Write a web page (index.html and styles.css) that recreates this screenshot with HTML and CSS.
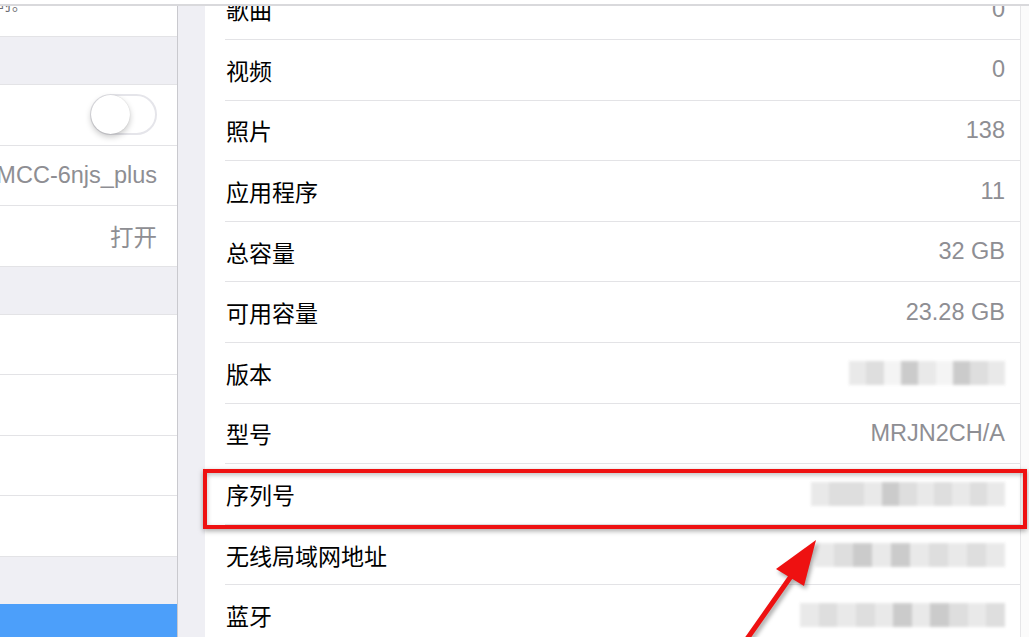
FILE: index.html
```html
<!DOCTYPE html>
<html lang="zh-CN">
<head>
  <meta charset="UTF-8">
  <title>关于本机</title>
  <link rel="stylesheet" href="styles.css">
</head>
<body>
  <div class="topbar"></div>
  <div class="screen">
    <div class="side">
      <div class="side-note"><span>在设备锁定时。</span></div>
      <div class="side-group"></div>
      <div class="side-row">
        <span class="switch"><span class="knob"></span></span>
      </div>
      <div class="side-row"><span class="side-value">CMCC-6njs_plus</span></div>
      <div class="side-row"><span class="side-value">打开</span></div>
      <div class="side-group"></div>
      <div class="side-row"></div>
      <div class="side-row"></div>
      <div class="side-row"></div>
      <div class="side-row"></div>
      <div class="side-group short"></div>
      <div class="side-selected"></div>
    </div>

    <div class="gutter"></div>

    <div class="detail">
      <ul class="info-list">
        <li><span class="label">歌曲</span><span class="value">0</span></li>
        <li><span class="label">视频</span><span class="value">0</span></li>
        <li><span class="label">照片</span><span class="value">138</span></li>
        <li><span class="label">应用程序</span><span class="value">11</span></li>
        <li><span class="label">总容量</span><span class="value">32 GB</span></li>
        <li><span class="label">可用容量</span><span class="value">23.28 GB</span></li>
        <li>
          <span class="label">版本</span>
          <span class="mosaic m-version">
            <i class="g1"></i><i class="g2"></i><i class="g0"></i><i class="g3"></i><i class="g1"></i><i class="g0"></i><i class="g3"></i><i class="g2"></i><i class="g1"></i>
          </span>
        </li>
        <li><span class="label">型号</span><span class="value">MRJN2CH/A</span></li>
        <li>
          <span class="label">序列号</span>
          <span class="mosaic m-serial">
            <i class="g1"></i><i class="g2"></i><i class="g2"></i><i class="g1"></i><i class="g3"></i><i class="g2"></i><i class="g1"></i><i class="g2"></i><i class="g1"></i><i class="g2"></i><i class="g1"></i>
          </span>
        </li>
        <li>
          <span class="label">无线局域网地址</span>
          <span class="mosaic m-wifi">
            <i class="g1"></i><i class="g2"></i><i class="g3"></i><i class="g1"></i><i class="g3"></i><i class="g1"></i><i class="g2"></i><i class="g1"></i><i class="g2"></i><i class="g1"></i>
          </span>
        </li>
        <li>
          <span class="label">蓝牙</span>
          <span class="mosaic m-bt">
            <i class="g1"></i><i class="g2"></i><i class="g1"></i><i class="g2"></i><i class="g1"></i><i class="g3"></i><i class="g1"></i><i class="g3"></i><i class="g2"></i><i class="g1"></i><i class="g2"></i>
          </span>
        </li>
      </ul>
    </div>

    <div class="edge"></div>
  </div>

  <!-- annotation drawn on top of the screenshot -->
  <div class="mark-box"></div>
  <svg class="mark-arrow" width="120" height="110" viewBox="0 0 120 110">
    <line x1="10" y1="110" x2="62" y2="36" stroke="#ee1111" stroke-width="5" stroke-linecap="round"/>
    <polygon points="84,4 44,33 72,50" fill="#ee1111"/>
  </svg>
</body>
</html>
```

FILE: styles.css
```css
html, body {
  margin: 0;
  padding: 0;
}
body {
  width: 1029px;
  height: 637px;
  overflow: hidden;
  position: relative;
  background: #fff;
  font-family: "Liberation Sans", "Noto Sans CJK SC", sans-serif;
  color: #000;
}
.topbar {
  height: 4px;
  border-bottom: 2px solid #d9d9dc;
  background: #fff;
}
.screen {
  display: flex;
  height: 631px;
  overflow: hidden;
}

/* left settings column */
.side {
  width: 177px;
  border-right: 1px solid #c9c9ce;
  background: #fff;
  display: flex;
  flex-direction: column;
  overflow: hidden;
}
.side-note {
  height: 31px;
  border-bottom: 1px solid #e3e3e6;
  overflow: hidden;
  display: flex;
  box-sizing: border-box;
}
.side-note span {
  font-size: 15px;
  color: #6d6d72;
  margin-top: -11px;
  margin-left: -78px;
  line-height: 20px;
  white-space: nowrap;
}
.side-group {
  height: 48px;
  background: #efeff4;
  border-bottom: 1px solid #e3e3e6;
  box-sizing: border-box;
}
.side-group.short { height: 47px; border-bottom: none; }
.side-row {
  height: 60.5px;
  border-bottom: 1px solid #e3e3e6;
  box-sizing: border-box;
  display: flex;
  align-items: center;
  justify-content: flex-end;
  padding-right: 20px;
  white-space: nowrap;
}
.side-value {
  font-size: 23.5px;
  color: #8e8e93;
}
.switch {
  width: 67px;
  height: 41px;
  border-radius: 21px;
  border: 2px solid #e5e5ea;
  box-sizing: border-box;
  background: #fff;
  position: relative;
}
.knob {
  position: absolute;
  left: -1px;
  top: -1px;
  width: 39px;
  height: 39px;
  border-radius: 50%;
  background: #fff;
  box-shadow: 0 3px 6px rgba(0, 0, 0, 0.22), 0 0 1px rgba(0, 0, 0, 0.2);
}
.side-selected {
  flex: 1;
  background: #4c9ffa;
}

.gutter {
  width: 27px;
  background: #efeff4;
}

/* right detail column */
.detail {
  width: 815px;
  background: #fff;
  border-right: 1px solid #e6e6e8;
  overflow: hidden;
}
.info-list {
  list-style: none;
  margin: -26.5px 0 0 0;
  padding: 0;
}
.info-list li {
  height: 60.6px;
  margin-left: 20px;
  padding-left: 1px;
  padding-right: 15px;
  border-bottom: 1px solid #e3e3e6;
  box-sizing: border-box;
  display: flex;
  align-items: center;
  justify-content: space-between;
}
.label {
  font-size: 23px;
  color: #000;
}
.value {
  font-size: 23.5px;
  color: #8e8e93;
}

.mosaic {
  display: flex;
  height: 24px;
  filter: blur(1.8px);
  opacity: 0.8;
}
.mosaic i {
  flex: 1;
  height: 100%;
}
.mosaic .g0 { background: #f2f2f2; }
.mosaic .g1 { background: #e4e4e4; }
.mosaic .g2 { background: #d6d6d6; }
.mosaic .g3 { background: #bfbfbf; }
.m-version { width: 156px; }
.m-serial { width: 194px; }
.m-wifi { width: 190px; }
.m-bt { width: 205px; }

.edge {
  flex: 1;
  background: #fbfbfb;
}

/* red annotation overlay */
.mark-box {
  position: absolute;
  left: 203px;
  top: 469px;
  width: 824px;
  height: 60px;
  box-sizing: border-box;
  border: 4px solid #ee1111;
  box-shadow: 0 2px 5px rgba(0, 0, 0, 0.35), inset 0 2px 5px rgba(0, 0, 0, 0.25);
}
.mark-arrow {
  position: absolute;
  left: 732px;
  top: 536px;
  filter: drop-shadow(2px 3px 2px rgba(0, 0, 0, 0.35));
}
```
